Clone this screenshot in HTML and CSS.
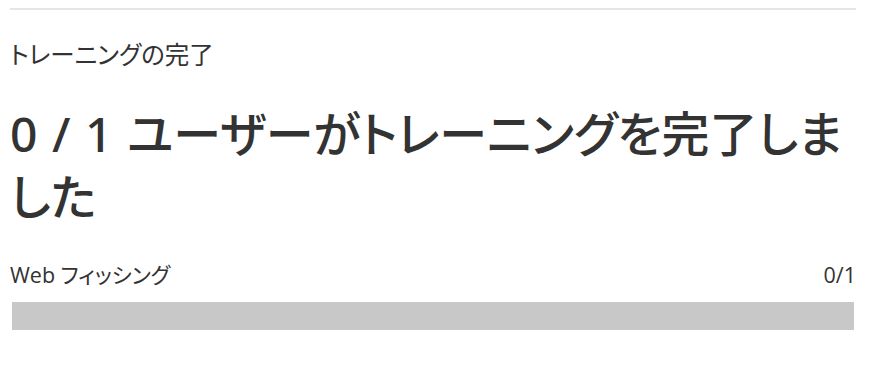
FILE: index.html
```html
<!DOCTYPE html>
<html lang="ja">
<head>
<meta charset="utf-8">
<link rel="stylesheet" href="styles.css">
</head>
<body>
<div class="card">
  <div class="rule"></div>
  <div class="label">トレーニングの完了</div>
  <h1 class="headline">0 / 1 ユーザーがトレーニングを完了しました</h1>
  <div class="row">
    <span class="name">Web フィッシング</span>
    <span class="count">0/1</span>
  </div>
  <div class="bar"></div>
</div>
</body>
</html>
```
FILE: styles.css
```css
html, body {
  margin: 0;
  padding: 0;
  background: #ffffff;
}
body {
  font-family: "Open Sans", "Noto Sans CJK JP", sans-serif;
  font-feature-settings: "palt";
  color: #333333;
}
.card {
  padding: 8px 23px 0 10px;
}
.rule {
  height: 2px;
  background: #e6e6e6;
}
.label {
  margin-top: 29px;
  font-size: 24.5px;
  line-height: 32px;
}
.headline {
  margin: 31px 0 0 0;
  font-family: "Noto Sans", "Noto Sans CJK JP", sans-serif;
  font-size: 48px;
  font-weight: 500;
  line-height: 63px;
  word-spacing: 2px;
}
.row {
  display: flex;
  justify-content: space-between;
  margin-top: 33px;
  font-size: 21.5px;
  line-height: 28px;
}
.bar {
  margin: 13px 2px 0 2px;
  height: 28px;
  background: #c8c8c8;
}
```
